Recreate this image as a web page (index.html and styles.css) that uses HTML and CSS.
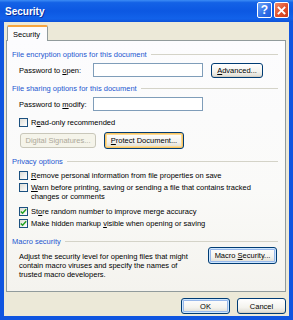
FILE: index.html
```html
<!DOCTYPE html>
<html>
<head>
<meta charset="utf-8">
<link rel="stylesheet" href="styles.css">
</head>
<body>
<div class="window">
  <div class="titlebar">
    <span class="title">Security</span>
    <div class="tb-buttons">
      <span class="tb-btn help">?</span>
      <span class="tb-btn close"><svg width="9" height="9" viewBox="0 0 9 9"><path d="M1.5 1.5 L7.5 7.5 M7.5 1.5 L1.5 7.5" stroke="#fff" stroke-width="1.8" stroke-linecap="square"/></svg></span>
    </div>
  </div>
  <div class="body">
    <div class="tabs"><div class="tab">Security</div></div>
    <div class="panel">
      <div class="group-head h1"><span>File encryption options for this document</span></div>
      <div class="field-row r1">
        <span class="label">Password to <u>o</u>pen:</span>
        <span class="input"></span>
        <span class="btn adv"><span><u>A</u>dvanced...</span></span>
      </div>
      <div class="group-head h2"><span>File sharing options for this document</span></div>
      <div class="field-row r2">
        <span class="label">Password to <u>m</u>odify:</span>
        <span class="input"></span>
      </div>
      <div class="check-row ro"><span class="cb"></span><span>R<u>e</u>ad-only recommended</span></div>
      <div class="btn-row">
        <span class="btn disabled digsig"><span>Digital Signatures...</span></span>
        <span class="btn hot protect"><span><u>P</u>rotect Document...</span></span>
      </div>
      <div class="group-head h3"><span>Privacy options</span></div>
      <div class="check-row rm"><span class="cb"></span><span><u>R</u>emove personal information from file properties on save</span></div>
      <div class="check-row warn"><span class="cb"></span><span><u>W</u>arn before printing, saving or sending a file that contains tracked changes or comments</span></div>
      <div class="check-row store"><span class="cb checked"><svg width="7" height="7" viewBox="0 0 7 7"><path d="M0.8 3.4 L2.6 5.3 L6.2 1.3" fill="none" stroke="#21a121" stroke-width="1.4"/></svg></span><span>St<u>o</u>re random number to improve merge accuracy</span></div>
      <div class="check-row make"><span class="cb checked"><svg width="7" height="7" viewBox="0 0 7 7"><path d="M0.8 3.4 L2.6 5.3 L6.2 1.3" fill="none" stroke="#21a121" stroke-width="1.4"/></svg></span><span>Make hidden markup <u>v</u>isible when opening or saving</span></div>
      <div class="group-head h4"><span>Macro security</span></div>
      <div class="macro-row">
        <p class="macro-text">Adjust the security level for opening files that might contain macro viruses and specify the names of trusted macro developers.</p>
        <span class="btn default macro"><span>Macro <u>S</u>ecurity...</span></span>
      </div>
    </div>
    <div class="footer">
      <span class="btn default ok"><span>OK</span></span>
      <span class="btn cancel"><span>Cancel</span></span>
    </div>
  </div>
</div>
</body>
</html>
```

FILE: styles.css
```css
* { box-sizing: border-box; }
html, body { margin: 0; padding: 0; }
body {
  width: 293px;
  height: 320px;
  overflow: hidden;
  font-family: "Liberation Sans", Arial, sans-serif;
  font-size: 7.5px;
  color: #000;
}
u { text-decoration: underline; text-underline-offset: 1px; }
.window {
  width: 293px;
  height: 320px;
  display: flex;
  flex-direction: column;
  background: #0f55e0;
  padding: 0 4px 4px 4px;
}
.titlebar {
  height: 22px;
  margin: 0 -4px;
  padding: 0 4px 0 5px;
  display: flex;
  align-items: center;
  justify-content: space-between;
  background: linear-gradient(to bottom, #3c8cf5 0%, #1462e6 12%, #0c58e2 50%, #1262ea 85%, #0e52d8 100%);
}
.title {
  color: #fff;
  font-weight: bold;
  font-size: 10px;
  text-shadow: 1px 1px 0 #0a2f9a;
  margin-top: 1px;
}
.tb-buttons { display: flex; gap: 2px; align-self: flex-start; margin-top: 2px; }
.tb-btn {
  width: 15px;
  height: 16px;
  border: 1px solid #fff;
  border-radius: 2px;
  display: flex;
  align-items: center;
  justify-content: center;
  color: #fff;
  font-weight: bold;
  font-size: 12px;
}
.help { background: linear-gradient(135deg, #6ea4f8, #2e6fe8 60%, #1d58d8); }
.close { background: linear-gradient(135deg, #f08b6a, #e0502c 55%, #c83c1c); }
.body {
  flex: 1;
  background: #ece9d8;
  display: flex;
  flex-direction: column;
  padding: 3px 3px 0 2px;
}
.tabs { display: flex; height: 15px; padding-left: 1px; }
.tab {
  width: 41px;
  height: 16px;
  background: #fcfcfe;
  border: 1px solid #919b9c;
  border-bottom: none;
  border-top: 2px solid #f6a540;
  border-radius: 2px 2px 0 0;
  display: flex;
  align-items: center;
  padding-left: 5px;
  position: relative;
  z-index: 1;
}
.panel {
  height: 252px;
  border: 1px solid #919b9c;
  background: linear-gradient(to bottom, #fcfcfe 0%, #fafaf8 60%, #f4f3ee 100%);
  padding: 6px 7px 0 5px;
  display: flex;
  flex-direction: column;
}
.group-head {
  height: 14px;
  display: flex;
  align-items: center;
  color: #2457d0;
}
.group-head::after {
  content: "";
  flex: 1;
  height: 1px;
  background: #d4d3c8;
  margin-left: 4px;
}
.field-row { height: 16px; display: flex; align-items: center; padding-left: 7px; }
.label { width: 74px; }
.input {
  width: 110px;
  height: 14px;
  border: 1px solid #7f9db9;
  background: #fff;
}
.btn {
  height: 15px;
  border: 1px solid #003c74;
  border-radius: 3px;
  background: linear-gradient(to bottom, #ffffff 0%, #f4f3ee 60%, #dcdad0 100%);
  display: inline-flex;
  align-items: center;
  justify-content: center;
  box-shadow: inset 0 -1px 0 #d6d0c5;
  white-space: nowrap;
}
.btn.adv { width: 52px; margin-left: 8px; }
.r1 { margin-top: 1px; }
.h2 { margin-top: 3px; }
.r2 { margin-top: 1px; }
.check-row { display: flex; align-items: flex-start; padding-left: 7px; line-height: 9px; min-height: 12px; }
.cb {
  width: 9px;
  height: 9px;
  border: 1px solid #1c5180;
  background: linear-gradient(135deg, #dcdcd6, #fff);
  margin-right: 3px;
  flex: none;
  display: flex;
  align-items: center;
  justify-content: center;
}
.ro { margin-top: 6px; }
.btn-row { display: flex; gap: 8px; margin-top: 2px; padding-left: 8px; height: 17px; align-items: center; }
.btn.disabled { color: #aca899; border-color: #c9c7ba; background: #f5f4ea; box-shadow: none; width: 76px; }
.btn.hot { width: 80px; height: 17px; box-shadow: inset 0 0 0 1px #f8c462, inset 0 0 0 2px #fbdb96; }
.h3 { margin-top: 5px; }
.rm { margin-top: 3px; }
.warn { margin-top: 0; min-height: 24px; padding-right: 24px; }
.store { margin-top: 0; }
.make { margin-top: 0; }
.h4 { margin-top: 3px; }
.macro-row { display: flex; justify-content: space-between; padding-left: 7px; }
.macro-text { margin: 4px 0 0; width: 182px; line-height: 9px; }
.btn.default { box-shadow: inset 0 0 0 1px #cee7ff, inset 0 0 0 2px #98b8ea; }
.btn.macro { width: 69px; height: 17px; margin-top: -1px; margin-right: 1px; }
.footer { display: flex; justify-content: flex-end; gap: 7px; padding: 6px 0 0; }
.btn.ok, .btn.cancel { width: 49px; height: 16px; }
```
